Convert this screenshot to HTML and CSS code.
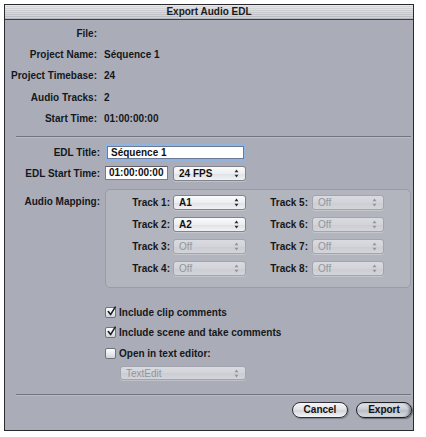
FILE: index.html
```html
<!DOCTYPE html>
<html>
<head>
<meta charset="utf-8">
<link rel="stylesheet" href="styles.css">
</head>
<body>
<div class="window">
  <div class="titlebar">Export Audio EDL</div>

  <div class="info">
    <div class="lbl">File:</div><div class="val"></div>
    <div class="lbl">Project Name:</div><div class="val">Séquence 1</div>
    <div class="lbl">Project Timebase:</div><div class="val">24</div>
    <div class="lbl">Audio Tracks:</div><div class="val">2</div>
    <div class="lbl">Start Time:</div><div class="val">01:00:00:00</div>
  </div>

  <div class="sep sep-top"></div>

  <div class="form">
    <div class="lbl">EDL Title:</div>
    <div class="row1"><div class="field title-field">Séquence 1</div></div>

    <div class="lbl">EDL Start Time:</div>
    <div class="row2 inline">
      <div class="field tc-field">01:00:00:00</div>
      <div class="popup fps-popup"><span>24 FPS</span><svg class="arr" width="5" height="9" viewBox="0 0 5 9"><polygon points="2.5,0.5 4.5,3.2 0.5,3.2"/><polygon points="0.5,5.8 4.5,5.8 2.5,8.5"/></svg></div>
    </div>

    <div class="lbl am">Audio Mapping:</div>
    <div class="group">
      <div class="tlbl">Track 1:</div>
      <div class="popup"><span>A1</span><svg class="arr" width="5" height="9" viewBox="0 0 5 9"><polygon points="2.5,0.5 4.5,3.2 0.5,3.2"/><polygon points="0.5,5.8 4.5,5.8 2.5,8.5"/></svg></div>
      <div class="tlbl t2">Track 5:</div>
      <div class="popup off"><span>Off</span><svg class="arr" width="5" height="9" viewBox="0 0 5 9"><polygon points="2.5,0.5 4.5,3.2 0.5,3.2"/><polygon points="0.5,5.8 4.5,5.8 2.5,8.5"/></svg></div>

      <div class="tlbl">Track 2:</div>
      <div class="popup"><span>A2</span><svg class="arr" width="5" height="9" viewBox="0 0 5 9"><polygon points="2.5,0.5 4.5,3.2 0.5,3.2"/><polygon points="0.5,5.8 4.5,5.8 2.5,8.5"/></svg></div>
      <div class="tlbl t2">Track 6:</div>
      <div class="popup off"><span>Off</span><svg class="arr" width="5" height="9" viewBox="0 0 5 9"><polygon points="2.5,0.5 4.5,3.2 0.5,3.2"/><polygon points="0.5,5.8 4.5,5.8 2.5,8.5"/></svg></div>

      <div class="tlbl">Track 3:</div>
      <div class="popup off"><span>Off</span><svg class="arr" width="5" height="9" viewBox="0 0 5 9"><polygon points="2.5,0.5 4.5,3.2 0.5,3.2"/><polygon points="0.5,5.8 4.5,5.8 2.5,8.5"/></svg></div>
      <div class="tlbl t2">Track 7:</div>
      <div class="popup off"><span>Off</span><svg class="arr" width="5" height="9" viewBox="0 0 5 9"><polygon points="2.5,0.5 4.5,3.2 0.5,3.2"/><polygon points="0.5,5.8 4.5,5.8 2.5,8.5"/></svg></div>

      <div class="tlbl">Track 4:</div>
      <div class="popup off"><span>Off</span><svg class="arr" width="5" height="9" viewBox="0 0 5 9"><polygon points="2.5,0.5 4.5,3.2 0.5,3.2"/><polygon points="0.5,5.8 4.5,5.8 2.5,8.5"/></svg></div>
      <div class="tlbl t2">Track 8:</div>
      <div class="popup off"><span>Off</span><svg class="arr" width="5" height="9" viewBox="0 0 5 9"><polygon points="2.5,0.5 4.5,3.2 0.5,3.2"/><polygon points="0.5,5.8 4.5,5.8 2.5,8.5"/></svg></div>
    </div>
  </div>

  <div class="checks">
    <div class="check-row">
      <span class="cb"><svg width="11" height="11" viewBox="0 0 11 11"><path d="M2.3 5.6 L4.6 8.6 L9.2 1.2" fill="none" stroke="#1d1f24" stroke-width="1.6" stroke-linecap="round" stroke-linejoin="round"/></svg></span>
      <span>Include clip comments</span>
    </div>
    <div class="check-row">
      <span class="cb"><svg width="11" height="11" viewBox="0 0 11 11"><path d="M2.3 5.6 L4.6 8.6 L9.2 1.2" fill="none" stroke="#1d1f24" stroke-width="1.6" stroke-linecap="round" stroke-linejoin="round"/></svg></span>
      <span>Include scene and take comments</span>
    </div>
    <div class="check-row">
      <span class="cb"></span>
      <span>Open in text editor:</span>
    </div>
    <div class="popup off editor-popup"><span>TextEdit</span><svg class="arr" width="5" height="9" viewBox="0 0 5 9"><polygon points="2.5,0.5 4.5,3.2 0.5,3.2"/><polygon points="0.5,5.8 4.5,5.8 2.5,8.5"/></svg></div>
  </div>

  <div class="sep sep-bottom"></div>

  <div class="buttons">
    <div class="btn">Cancel</div>
    <div class="btn default">Export</div>
  </div>
</div>
</body>
</html>
```

FILE: styles.css
```css
html, body {
  margin: 0;
  padding: 0;
  background: #ffffff;
}

body {
  font-family: "Liberation Sans", Arial, sans-serif;
  font-weight: bold;
  font-size: 10px;
  color: #15171c;
}

.window {
  margin: 4px 0 0 4px;
  width: 410px;
  height: 427px;
  box-sizing: border-box;
  border: 1px solid #2a2b2f;
  background: #aaadb8;
  display: flex;
  flex-direction: column;
}

.titlebar {
  height: 14px;
  line-height: 14px;
  text-align: center;
  border-bottom: 1px solid #3d3f45;
  color: #1a1a1a;
  background:
    repeating-linear-gradient(to bottom, rgba(255,255,255,0.35) 0 1px, rgba(0,0,0,0) 1px 2px),
    linear-gradient(to bottom, #dcdde0, #b4b6bc);
}

.info {
  display: grid;
  grid-template-columns: 92px 1fr;
  column-gap: 7px;
  grid-auto-rows: 21.3px;
  align-items: center;
  padding-top: 2.5px;
}

.lbl {
  text-align: right;
  white-space: nowrap;
}

.sep {
  height: 0;
  border-top: 1px solid #71747d;
  border-bottom: 1px solid #b9bcc5;
  margin-left: 11px;
  margin-right: 2px;
}

.sep-top {
  margin-top: 7px;
}

.form {
  display: grid;
  grid-template-columns: 95px 306px;
  column-gap: 5px;
  row-gap: 5px;
  margin-top: 6px;
  align-items: center;
}

.row1 { height: 17px; display: flex; align-items: center; }
.row2 { height: 15px; }

.inline {
  display: flex;
  align-items: center;
  gap: 5px;
}

.field {
  box-sizing: border-box;
  background: #ffffff;
  border: 1px solid #7a7d86;
  border-top-color: #5d6068;
  padding-left: 3px;
  line-height: 12px;
  color: #111;
}

.title-field {
  width: 141px;
  height: 17px;
  border: 2px solid #93b3de;
  box-shadow: inset 0 0 0 1px #6a7a96;
  padding-left: 4px;
  line-height: 13px;
}

.tc-field {
  width: 63px;
  height: 14px;
}

.popup {
  box-sizing: border-box;
  height: 15px;
  border: 1px solid #80838c;
  border-radius: 3px;
  background: linear-gradient(to bottom, #fbfbfc 0%, #eceef1 50%, #dfe1e6 51%, #f1f2f4 100%);
  display: flex;
  align-items: center;
  justify-content: space-between;
  padding: 0 6px 0 5px;
  line-height: 13px;
  color: #111;
  box-shadow: 0 1px 0 rgba(255,255,255,0.25);
}

.popup .arr {
  fill: #2b2d33;
}

.popup.off {
  color: #92959c;
  border-color: #a2a5ad;
  background: linear-gradient(to bottom, #d9dbe0 0%, #d2d4d9 50%, #cbcdd3 51%, #d3d5da 100%);
  font-weight: normal;
}

.popup.off .arr {
  fill: #92959c;
}

.fps-popup {
  width: 73px;
}

.am {
  align-self: start;
  padding-top: 10px;
  line-height: 12px;
}

.group {
  box-sizing: border-box;
  width: 306px;
  margin-top: 3px;
  border: 1px solid #999ca6;
  border-radius: 5px;
  background: #b2b5be;
  padding: 5px 0 11px 0;
  display: grid;
  grid-template-columns: 67px 73px 66px 72px;
  grid-auto-rows: 15px;
  row-gap: 7px;
  align-items: center;
}

.tlbl {
  text-align: right;
  padding-right: 3px;
  white-space: nowrap;
}

.tlbl.t2 {
  padding-right: 4px;
}

.checks {
  margin-top: 14px;
  padding-left: 100px;
  display: flex;
  flex-direction: column;
}

.check-row {
  height: 20.5px;
  display: flex;
  align-items: center;
  gap: 3px;
  white-space: nowrap;
}

.cb {
  box-sizing: border-box;
  width: 11px;
  height: 11px;
  border: 1px solid #6f727b;
  border-radius: 2px;
  background: linear-gradient(to bottom, #ffffff, #d3d5db);
  display: flex;
  position: relative;
}

.cb svg {
  position: absolute;
  left: 0;
  top: -2px;
}

.editor-popup {
  width: 126px;
  height: 14px;
  margin-left: 15px;
  margin-top: 3px;
}

.sep-bottom {
  margin-top: 14px;
}

.buttons {
  display: flex;
  justify-content: flex-end;
  gap: 8px;
  padding-right: 1px;
  margin-top: 6px;
}

.btn {
  box-sizing: border-box;
  width: 56px;
  height: 16px;
  line-height: 14px;
  text-align: center;
  border: 1px solid #2f3036;
  border-radius: 8px;
  color: #111;
  background: linear-gradient(to bottom, #f6f6f7 0%, #e3e4e7 45%, #d3d5da 55%, #f5f6f7 100%);
  box-shadow: 1px 1px 1px rgba(0,0,0,0.25);
}

.btn.default {
  background: linear-gradient(to bottom, #e4e6ea 0%, #c9ccd3 45%, #b8bcc5 55%, #dfe2e7 100%);
  border-color: #1f2024;
  box-shadow: 1px 1px 1px rgba(0,0,0,0.4), inset -2px 0 2px rgba(0,0,0,0.3);
}
```
